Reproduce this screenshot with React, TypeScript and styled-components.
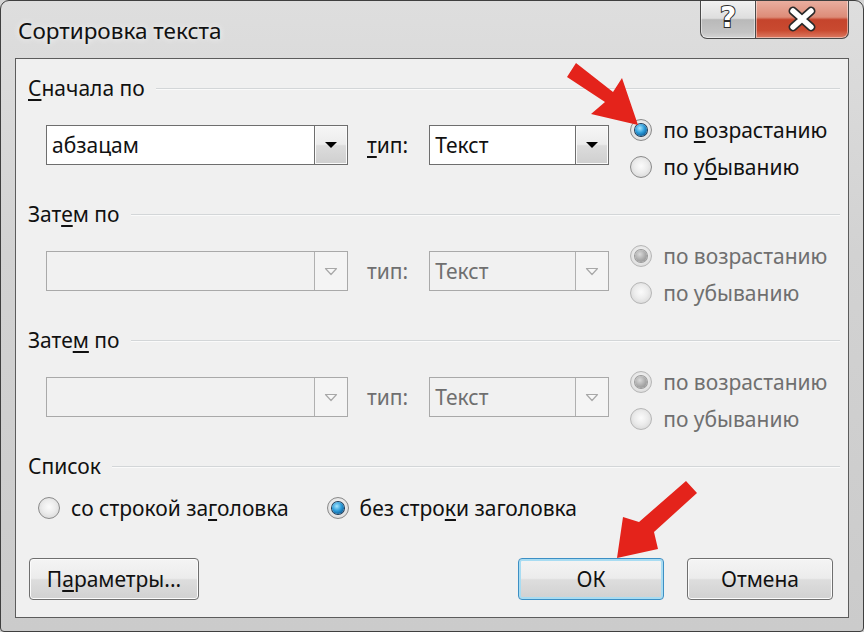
import React from "react";
import styled, { createGlobalStyle } from "styled-components";

const Global = createGlobalStyle`
  html, body { margin: 0; padding: 0; background: #d4d4d4; }
  body { font-family: "Noto Sans", "Open Sans", "DejaVu Sans", sans-serif; }
  * { box-sizing: border-box; }
`;

const Window = styled.div`
  position: relative;
  width: 864px;
  height: 632px;
  border: 1px solid #3f3f3f;
  border-radius: 9px 9px 4px 4px;
  background: linear-gradient(180deg, #dedede 0%, #d2d2d2 40%, #cbcbcb 100%);
  padding: 0 14px 13px 14px;
  display: flex;
  flex-direction: column;
  overflow: hidden;
`;

const TitleBar = styled.div`
  height: 57px;
  display: flex;
  align-items: flex-start;
  justify-content: space-between;
`;

const TitleText = styled.div`
  margin-top: 14px;
  padding-left: 3px;
  font-size: 22.5px;
  color: #111;
  text-shadow: 0 0 6px rgba(255, 255, 255, 0.9);
`;

const TitleButtons = styled.div`
  display: flex;
  margin-top: -1px;
`;

const CaptionButton = styled.div<{ $close?: boolean }>`
  height: 39px;
  width: ${(p) => (p.$close ? "93px" : "56px")};
  border: 1px solid #4a4a4a;
  border-top: none;
  border-left: ${(p) => (p.$close ? "none" : "1px solid #4a4a4a")};
  border-radius: ${(p) => (p.$close ? "0 0 7px 0" : "0 0 0 7px")};
  background: ${(p) =>
    p.$close
      ? "linear-gradient(180deg, #eab0a2 0%, #dd8c78 45%, #c5442c 52%, #c94a30 80%, #dc7a62 100%)"
      : "linear-gradient(180deg, #f2f2f2 0%, #dedede 48%, #b9b9b9 52%, #c4c4c4 85%, #d4d4d4 100%)"};
  box-shadow: inset 0 0 0 1px rgba(255, 255, 255, 0.45);
  display: flex;
  align-items: center;
  justify-content: center;
`;

const HelpGlyph = styled.span`
  font-family: "DejaVu Sans", sans-serif;
  font-weight: bold;
  font-size: 28px;
  color: #ffffff;
  -webkit-text-stroke: 2px #2c2c2c;
  paint-order: stroke fill;
  line-height: 1;
  margin-top: -2px;
`;

const Client = styled.div`
  flex: 1;
  border: 1px solid #5c5c5c;
  background: #f0f0f0;
  padding: 14px 8px 17px 12px;
  display: flex;
  flex-direction: column;
`;

const Group = styled.div`
  display: flex;
  flex-direction: column;
  margin-bottom: 14px;
`;

const Header = styled.div`
  height: 30px;
  display: flex;
  align-items: center;
  gap: 11px;
  font-size: 21px;
  color: #111;
`;

const HeaderLine = styled.div`
  flex: 1;
  height: 1px;
  background: #d3d6d8;
  box-shadow: 0 1px 0 #fafafa;
`;

const Row = styled.div`
  display: flex;
  align-items: flex-start;
  padding-left: 18px;
  margin-top: 8px;
  height: 74px;
`;

const Combo = styled.div<{ $w: number; $disabled?: boolean }>`
  width: ${(p) => p.$w}px;
  height: 40px;
  margin-top: 14px;
  border: 1px solid ${(p) => (p.$disabled ? "#a9a9a9" : "#6e6e6e")};
  background: ${(p) => (p.$disabled ? "#f1f1f1" : "#ffffff")};
  display: flex;
  align-items: stretch;
`;

const ComboText = styled.div<{ $disabled?: boolean }>`
  flex: 1;
  padding-left: 5px;
  display: flex;
  align-items: center;
  font-size: 21px;
  color: ${(p) => (p.$disabled ? "#6f6f6f" : "#111")};
`;

const DropButton = styled.div<{ $disabled?: boolean }>`
  width: 33px;
  border-left: 1px solid ${(p) => (p.$disabled ? "#b0b0b0" : "#6e6e6e")};
  background: ${(p) =>
    p.$disabled
      ? "#f4f4f4"
      : "linear-gradient(180deg, #f6f6f6 0%, #ececec 48%, #dcdcdc 52%, #cfcfcf 100%)"};
  box-shadow: ${(p) => (p.$disabled ? "none" : "inset 0 0 0 1px #fafafa")};
  display: flex;
  align-items: center;
  justify-content: center;
`;

const TypeLabel = styled.div<{ $disabled?: boolean }>`
  margin: 14px 21px 0 19px;
  height: 40px;
  line-height: 40px;
  font-size: 21px;
  color: ${(p) => (p.$disabled ? "#6f6f6f" : "#111")};
`;

const RadioColumn = styled.div`
  margin-left: 21px;
  display: flex;
  flex-direction: column;
`;

const RadioLine = styled.div<{ $h?: number; $disabled?: boolean }>`
  height: ${(p) => p.$h ?? 37}px;
  display: flex;
  align-items: center;
  gap: 11px;
  font-size: 21px;
  color: ${(p) => (p.$disabled ? "#6f6f6f" : "#111")};
`;

const RadioCircle = styled.div<{ $checked?: boolean; $disabled?: boolean }>`
  width: 22px;
  height: 22px;
  border-radius: 50%;
  border: 1px solid ${(p) => (p.$disabled ? "#b6b6b6" : "#8a8a8a")};
  background: radial-gradient(circle at 50% 45%, #fbfbfb 0%, #ececec 45%, #cfcfcf 100%);
  display: flex;
  align-items: center;
  justify-content: center;
  flex: none;
  &::after {
    content: "";
    display: ${(p) => (p.$checked ? "block" : "none")};
    width: 12px;
    height: 12px;
    border-radius: 50%;
    background: ${(p) =>
      p.$disabled
        ? "radial-gradient(circle at 40% 35%, #dadada 0%, #a9a9a9 55%, #8a8a8a 100%)"
        : "radial-gradient(circle at 40% 35%, #a6e6ff 0%, #2a9ad8 45%, #0d5a94 80%, #0a2f52 100%)"};
    box-shadow: 0 0 0 1px ${(p) => (p.$disabled ? "#9a9a9a" : "#1d3b57")};
  }
`;

const Acc = styled.span`
  text-decoration: underline;
  text-underline-offset: 3px;
  text-decoration-thickness: 2px;
`;

const ListRow = styled.div`
  display: flex;
  align-items: center;
  padding-left: 10px;
  margin-top: 9px;
  gap: 38px;
`;

const ButtonRow = styled.div`
  margin-top: auto;
  display: flex;
  align-items: center;
  padding-left: 1px;
  padding-right: 7px;
  gap: 23px;
`;

const Spacer = styled.div`
  flex: 1;
`;

const PushButton = styled.div<{ $w: number; $default?: boolean }>`
  width: ${(p) => p.$w}px;
  height: 42px;
  border-radius: 4px;
  border: 1px solid ${(p) => (p.$default ? "#3c8fc4" : "#6f6f6f")};
  background: linear-gradient(180deg, #f4f4f4 0%, #ececec 48%, #dddddd 52%, #d1d1d1 100%);
  box-shadow: inset 0 0 0 ${(p) => (p.$default ? "2px #a8dcf2" : "1px #fbfbfb")};
  display: flex;
  align-items: center;
  justify-content: center;
  font-size: 21px;
  color: #111;
`;

const Overlay = styled.svg`
  position: absolute;
  left: -1px;
  top: -1px;
  pointer-events: none;
`;

function Arrow({ disabled }: { disabled?: boolean }) {
  if (disabled) {
    return (
      <svg width="14" height="9" viewBox="0 0 14 9">
        <path d="M1.5 1.5 L12.5 1.5 L7 7.5 Z" fill="#f8f8f8" stroke="#a8a8a8" strokeWidth="1.2" strokeLinejoin="round" />
      </svg>
    );
  }
  return (
    <svg width="14" height="8" viewBox="0 0 14 8">
      <path d="M1 1 L13 1 L7 7 Z" fill="#000" />
    </svg>
  );
}

type Sel = { label: React.ReactNode; checked?: boolean };

function Radio({ label, checked, disabled, h }: Sel & { disabled?: boolean; h?: number }) {
  return (
    <RadioLine $disabled={disabled} $h={h}>
      <RadioCircle $checked={checked} $disabled={disabled} />
      <span>{label}</span>
    </RadioLine>
  );
}

function SortGroup({
  title,
  value,
  disabled,
  asc,
  desc,
  type,
}: {
  title: React.ReactNode;
  value: string;
  disabled?: boolean;
  asc: React.ReactNode;
  desc: React.ReactNode;
  type: React.ReactNode;
}) {
  return (
    <Group>
      <Header>
        <span>{title}</span>
        <HeaderLine />
      </Header>
      <Row>
        <Combo $w={302} $disabled={disabled}>
          <ComboText $disabled={disabled}>{value}</ComboText>
          <DropButton $disabled={disabled}>
            <Arrow disabled={disabled} />
          </DropButton>
        </Combo>
        <TypeLabel $disabled={disabled}>{type}</TypeLabel>
        <Combo $w={180} $disabled={disabled}>
          <ComboText $disabled={disabled}>Текст</ComboText>
          <DropButton $disabled={disabled}>
            <Arrow disabled={disabled} />
          </DropButton>
        </Combo>
        <RadioColumn>
          <Radio label={asc} checked disabled={disabled} />
          <Radio label={desc} disabled={disabled} />
        </RadioColumn>
      </Row>
    </Group>
  );
}

export default function App() {
  return (
    <>
      <Global />
      <Window>
        <TitleBar>
          <TitleText>Сортировка текста</TitleText>
          <TitleButtons>
            <CaptionButton>
              <HelpGlyph>?</HelpGlyph>
            </CaptionButton>
            <CaptionButton $close>
              <svg width="34" height="26" viewBox="0 0 34 26">
                <path d="M8 5 L26 21 M26 5 L8 21" stroke="#2a2a2a" strokeWidth="9" strokeLinecap="round" />
                <path d="M8 5 L26 21 M26 5 L8 21" stroke="#ffffff" strokeWidth="5.5" strokeLinecap="round" />
              </svg>
            </CaptionButton>
          </TitleButtons>
        </TitleBar>
        <Client>
          <SortGroup
            title={<><Acc>С</Acc>начала по</>}
            value="абзацам"
            type={<><Acc>т</Acc>ип:</>}
            asc={<>по <Acc>в</Acc>озрастанию</>}
            desc={<>по у<Acc>б</Acc>ыванию</>}
          />
          <SortGroup
            title={<>Зат<Acc>е</Acc>м по</>}
            value=""
            disabled
            type="тип:"
            asc="по возрастанию"
            desc="по убыванию"
          />
          <SortGroup
            title={<>Зате<Acc>м</Acc> по</>}
            value=""
            disabled
            type="тип:"
            asc="по возрастанию"
            desc="по убыванию"
          />
          <Header>
            <span>Список</span>
            <HeaderLine />
          </Header>
          <ListRow>
            <Radio h={36} label={<>со строкой за<Acc>г</Acc>оловка</>} />
            <Radio h={36} checked label={<>без стро<Acc>к</Acc>и заголовка</>} />
          </ListRow>
          <ButtonRow>
            <PushButton $w={170}>
              <span>П<Acc>а</Acc>раметры...</span>
            </PushButton>
            <Spacer />
            <PushButton $w={146} $default>
              ОК
            </PushButton>
            <PushButton $w={146}>Отмена</PushButton>
          </ButtonRow>
        </Client>
        <Overlay width="864" height="632" viewBox="0 0 864 632">
          <g fill="#e4231b">
            <path d="M567 77 L576 63 L613 92 L622 78 L638 125 L591 114 L605 102 Z" />
            <path d="M686 481 L697 493 L654 532 L658 549 L617 558 L623 517 L639 522 Z" />
          </g>
        </Overlay>
      </Window>
    </>
  );
}
